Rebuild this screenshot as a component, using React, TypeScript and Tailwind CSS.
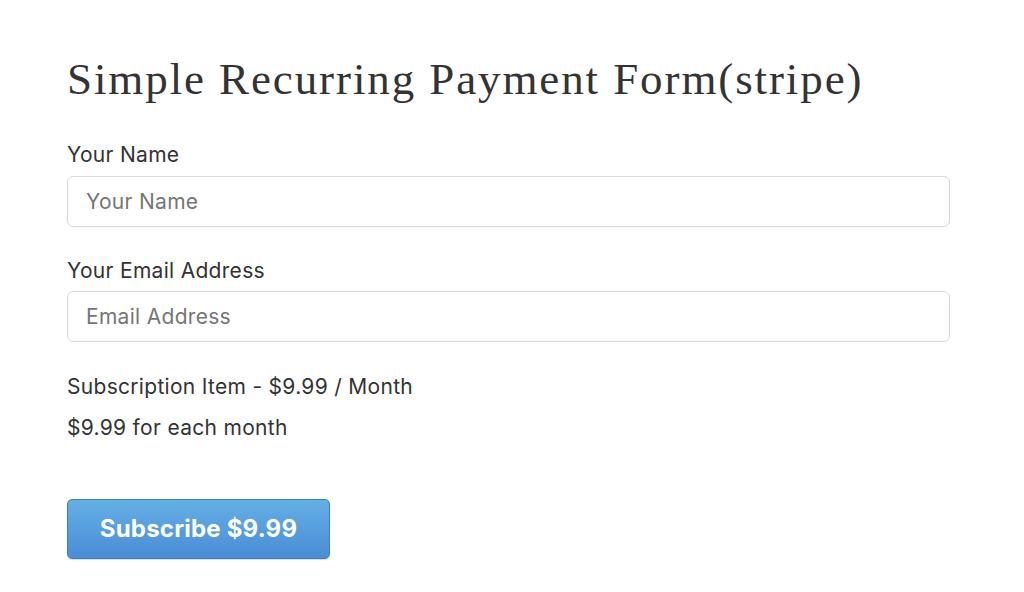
export default function App() {
  return (
    <main className="w-[1024px] h-[592px] bg-white pl-[67px] pr-[74px] pt-[51px] text-[#333]" style={{ fontFamily: 'Inter, "Liberation Sans", Arial, sans-serif' }}>
      <h1 className="text-[45px] leading-[56px] text-[#333] whitespace-nowrap tracking-[1.9px]" style={{ fontFamily: '"Liberation Serif", Georgia, serif' }}>
        Simple Recurring Payment Form(stripe)
      </h1>
      <form className="flex flex-col mt-[34px] tracking-[0.3px]">
        <label className="text-[21px] leading-[28px]">Your Name</label>
        <input
          className="mt-[7px] h-[51px] w-full rounded-[6px] border border-[#d4d7db] px-[18px] text-[21px] tracking-[0.3px] placeholder:text-[#767676] outline-none"
          placeholder="Your Name"
        />
        <label className="text-[21px] leading-[28px] mt-[30px]">Your Email Address</label>
        <input
          className="mt-[6px] h-[51px] w-full rounded-[6px] border border-[#d4d7db] px-[18px] text-[21px] tracking-[0.3px] placeholder:text-[#767676] outline-none"
          placeholder="Email Address"
        />
        <p className="text-[21px] leading-[28px] mt-[31px]">Subscription Item - $9.99 / Month</p>
        <p className="text-[21px] leading-[28px] mt-[13px]">$9.99 for each month</p>
        <div className="mt-[57px]">
          <button
            type="button"
            className="w-[263px] h-[60px] rounded-[5px] border border-[#3f7fc7] bg-gradient-to-b from-[#64b0e5] to-[#4a8cd6] text-white font-bold text-[24px] tracking-[0.2px] shadow-[0_1px_1px_rgba(0,0,0,0.15)]"
          >
            Subscribe $9.99
          </button>
        </div>
      </form>
    </main>
  );
}
